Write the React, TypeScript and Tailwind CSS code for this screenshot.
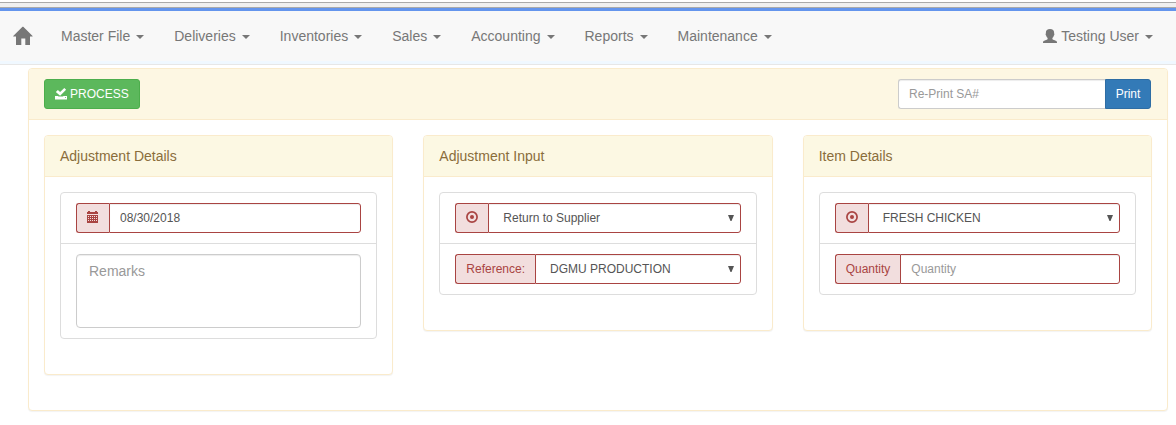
import React, { useState } from "react";

const menus = ["Master File", "Deliveries", "Inventories", "Sales", "Accounting", "Reports", "Maintenance"];

function Caret() {
  return (
    <svg className="mt-0.5 ml-1.5 h-1 w-2 fill-current" viewBox="0 0 8 4" aria-hidden="true">
      <path d="M0 0h8L4 4z" />
    </svg>
  );
}

function HomeIcon() {
  return (
    <svg className="h-5 w-5 fill-current" viewBox="0 0 20 20" aria-hidden="true">
      <path d="M9.500.7h.8L19.600 10v.6H17V19h-4.700v-6.400H8.300V19H3v-8.400H.2V10z" />
    </svg>
  );
}

function UserIcon() {
  return (
    <svg className="mr-1 h-3.5 w-3.5 fill-current" viewBox="0 0 14 14" aria-hidden="true">
      <path d="M7 0c2.700 0 4.100 1.400 4.100 3.500v1c.5.3.4 1.300-.2 2-.3 1.100-.8 1.900-1.500 2.500v.9c.3.6 1.200.9 2.300 1.300 1.500.5 2.300 1 2.300 2.300v.5H0v-.5c0-1.300.8-1.800 2.300-2.300 1.100-.4 2-.7 2.300-1.300V9C3.900 8.400 3.400 7.600 3.100 6.500c-.6-.7-.7-1.700-.2-2v-1C2.900 1.400 4.300 0 7 0z" />
    </svg>
  );
}

function SavedIcon() {
  return (
    <svg className="mr-[3px] h-3 w-3 fill-current" viewBox="0 0 12 12" aria-hidden="true">
      <path d="M.8 3.900 2.900 2l2.200 2.100L9.300 0l1.800 1.800-6 6zM0 8h12v3.500H0z" />
      <path className="fill-[#5cb85c]" d="M3 8h5.500l-.5.500H3.500zM10 9h1v.7h-1z" />
    </svg>
  );
}

function CalendarIcon() {
  return (
    <svg className="mb-0.5 h-3 w-3 fill-current" viewBox="0 0 12 12" aria-hidden="true">
      <path d="M1 0h2v1h5V0h2v1h1v2H0V1h1z" />
      <path
        fillRule="evenodd"
        d="M0 4h11v8H0zM1 5v1h1V5zM3 5v1h1V5zM5 5v1h1V5zM7 5v1h1V5zM9 5v1h1V5zM1 7v1h1V7zM3 7v1h1V7zM5 7v1h1V7zM7 7v1h1V7zM9 7v1h1V7zM1 9v1h1V9zM3 9v1h1V9zM5 9v1h1V9zM7 9v1h1V9zM9 9v1h1V9z"
      />
    </svg>
  );
}

function RecordIcon() {
  return (
    <svg className="mb-0.5 h-3 w-3" viewBox="0 0 12 12" aria-hidden="true">
      <circle cx="6" cy="6" r="5.100" fill="none" stroke="currentColor" strokeWidth="1.700" />
      <circle cx="6" cy="6" r="2" fill="currentColor" />
    </svg>
  );
}

function Addon({ id, children }: { id: string; children: React.ReactNode }) {
  return (
    <label
      htmlFor={id}
      className="flex shrink-0 items-center rounded-l-[3px] border border-r-0 border-[#a94442] bg-[#f2dede] px-2.5 text-xs text-[#a94442]"
    >
      {children}
    </label>
  );
}

const fieldClass =
  "h-full w-full min-w-0 rounded-r-[3px] border border-[#a94442] bg-white text-xs text-[#555] shadow-[inset_0_1px_1px_rgba(0,0,0,0.075)] placeholder:text-[#999]";

function SelectField({ id, label, addon, options }: { id: string; label: string; addon: React.ReactNode; options: string[] }) {
  return (
    <div className="flex h-[30px]">
      <Addon id={id}>{addon}</Addon>
      <div className="relative min-w-0 grow">
        <select id={id} aria-label={label} className={fieldClass + " appearance-none pr-6 pl-3.5"}>
          {options.map((o) => (
            <option key={o}>{o}</option>
          ))}
        </select>
        <svg
          className="pointer-events-none absolute top-3 right-[7px] h-1.5 w-1.5 fill-[#555]"
          viewBox="0 0 6 6"
          aria-hidden="true"
        >
          <path d="M0 0h6L3.500 6h-1z" />
        </svg>
      </div>
    </div>
  );
}

function TextField({ id, label, addon, value, placeholder }: { id: string; label: string; addon: React.ReactNode; value?: string; placeholder?: string }) {
  return (
    <div className="flex h-[30px]">
      <Addon id={id}>{addon}</Addon>
      <input
        id={id}
        type="text"
        aria-label={label}
        defaultValue={value}
        placeholder={placeholder}
        className={fieldClass + " px-2.5"}
      />
    </div>
  );
}

function Panel({ title, children }: { title: string; children: React.ReactNode }) {
  return (
    <section className="rounded border border-[#faebcc] bg-white shadow-[0_1px_1px_rgba(0,0,0,0.05)]">
      <h2 className="rounded-t-[3px] border-b border-[#faebcc] bg-[#fcf8e3] px-[15px] py-2.5 text-sm text-[#8a6d3b]">
        {title}
      </h2>
      <div className="px-[15px] pt-[15px] pb-[35px]">
        <ul className="divide-y divide-[#ddd] rounded border border-[#ddd]">
          {React.Children.map(children, (child) => (
            <li className="px-[15px] py-2.5">{child}</li>
          ))}
        </ul>
      </div>
    </section>
  );
}

export default function App() {
  const [reprint, setReprint] = useState("");
  return (
    <div className="font-['Liberation_Sans',Arial,sans-serif] text-sm text-[#333]">
      <div className="mt-0.5 h-1.5 border-y border-[#aaa] bg-[#f0f0f0]" />
      <nav className="flex flex-wrap items-center border-t-[3px] border-b border-t-[#6495ed] border-b-[#e7e7e7] bg-[#f8f8f8] text-[#777]">
        <a href="#home" aria-label="Home" className="px-[13px] py-[15px]">
          <HomeIcon />
        </a>
        {menus.map((m) => (
          <a key={m} href="#menu" className="flex items-center px-[15px] py-[15px]">
            {m}
            <Caret />
          </a>
        ))}
        <a href="#user" className="mr-2 ml-auto flex items-center px-[15px] py-[15px]">
          <UserIcon />
          Testing User
          <Caret />
        </a>
        <div className="h-[3px] w-full bg-[#f0f8ff]" />
      </nav>

      <main className="pt-[3px] pr-2 pb-3.5 pl-7">
        <div className="rounded border border-[#faebcc] bg-white shadow-[0_1px_1px_rgba(0,0,0,0.05)]">
          <header className="flex items-center justify-between rounded-t-[3px] border-b border-[#faebcc] bg-[#fdf7e3] py-2.5 pr-4 pl-[15px]">
            <button
              type="button"
              className="flex h-[30px] items-center rounded-[3px] border border-[#4cae4c] bg-[#5cb85c] px-2.5 text-xs text-white"
            >
              <SavedIcon />
              PROCESS
            </button>
            <form className="flex h-[30px] w-[253px]" onSubmit={(e) => e.preventDefault()}>
              <input
                type="text"
                aria-label="Re-Print SA#"
                placeholder="Re-Print SA#"
                value={reprint}
                onChange={(e) => setReprint(e.target.value)}
                className="min-w-0 grow rounded-l-[3px] border border-r-0 border-[#ccc] bg-white px-2.5 text-xs text-[#555] shadow-[inset_0_1px_1px_rgba(0,0,0,0.075)] placeholder:text-[#999]"
              />
              <button
                type="submit"
                className="w-[46px] shrink-0 rounded-r-[3px] border border-[#2e6da4] bg-[#337ab7] text-xs text-white"
              >
                Print
              </button>
            </form>
          </header>

          <div className="grid grid-cols-3 items-start gap-x-[30px] px-[15px] pt-[15px] pb-[35px]">
            <Panel title="Adjustment Details">
              <TextField id="date" label="Date" addon={<CalendarIcon />} value="08/30/2018" />
              <textarea
                aria-label="Remarks"
                placeholder="Remarks"
                rows={3}
                className="block h-[74px] w-full resize-none rounded border border-[#ccc] bg-white px-3 py-1.5 text-sm text-[#555] shadow-[inset_0_1px_1px_rgba(0,0,0,0.075)] placeholder:text-[#999]"
              />
            </Panel>
            <Panel title="Adjustment Input">
              <SelectField id="type" label="Adjustment type" addon={<RecordIcon />} options={["Return to Supplier"]} />
              <SelectField id="reference" label="Reference" addon="Reference:" options={["DGMU PRODUCTION"]} />
            </Panel>
            <Panel title="Item Details">
              <SelectField id="item" label="Item" addon={<RecordIcon />} options={["FRESH CHICKEN"]} />
              <TextField id="quantity" label="Quantity" addon="Quantity" placeholder="Quantity" />
            </Panel>
          </div>
        </div>
      </main>
    </div>
  );
}
